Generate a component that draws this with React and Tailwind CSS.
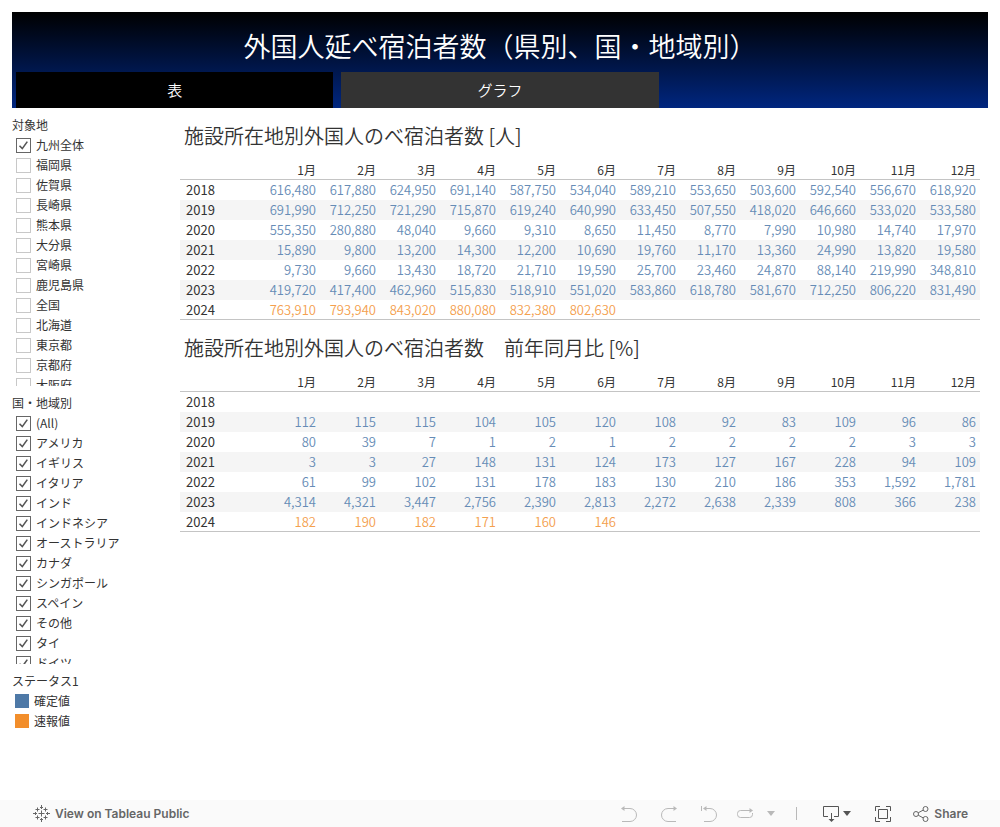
import { useState } from 'react';

const prefectures = [
  '九州全体', '福岡県', '佐賀県', '長崎県', '熊本県', '大分県', '宮崎県',
  '鹿児島県', '全国', '北海道', '東京都', '京都府', '大阪府',
];

const countries = [
  '(All)', 'アメリカ', 'イギリス', 'イタリア', 'インド', 'インドネシア', 'オーストラリア',
  'カナダ', 'シンガポール', 'スペイン', 'その他', 'タイ', 'ドイツ',
];

const months = ['1月', '2月', '3月', '4月', '5月', '6月', '7月', '8月', '9月', '10月', '11月', '12月'];

const guests = [
  { year: 2018, values: [616480, 617880, 624950, 691140, 587750, 534040, 589210, 553650, 503600, 592540, 556670, 618920] },
  { year: 2019, values: [691990, 712250, 721290, 715870, 619240, 640990, 633450, 507550, 418020, 646660, 533020, 533580] },
  { year: 2020, values: [555350, 280880, 48040, 9660, 9310, 8650, 11450, 8770, 7990, 10980, 14740, 17970] },
  { year: 2021, values: [15890, 9800, 13200, 14300, 12200, 10690, 19760, 11170, 13360, 24990, 13820, 19580] },
  { year: 2022, values: [9730, 9660, 13430, 18720, 21710, 19590, 25700, 23460, 24870, 88140, 219990, 348810] },
  { year: 2023, values: [419720, 417400, 462960, 515830, 518910, 551020, 583860, 618780, 581670, 712250, 806220, 831490] },
  { year: 2024, values: [763910, 793940, 843020, 880080, 832380, 802630], preliminary: true },
];

const ratios = [
  { year: 2018, values: [] },
  { year: 2019, values: [112, 115, 115, 104, 105, 120, 108, 92, 83, 109, 96, 86] },
  { year: 2020, values: [80, 39, 7, 1, 2, 1, 2, 2, 2, 2, 3, 3] },
  { year: 2021, values: [3, 3, 27, 148, 131, 124, 173, 127, 167, 228, 94, 109] },
  { year: 2022, values: [61, 99, 102, 131, 178, 183, 130, 210, 186, 353, 1592, 1781] },
  { year: 2023, values: [4314, 4321, 3447, 2756, 2390, 2813, 2272, 2638, 2339, 808, 366, 238] },
  { year: 2024, values: [182, 190, 182, 171, 160, 146], preliminary: true },
];

function FilterList({ title, items, initial }) {
  const [selected, setSelected] = useState(initial);

  const toggle = (item) => {
    setSelected((prev) => (prev.includes(item) ? prev.filter((i) => i !== item) : [...prev, item]));
  };

  return (
    <fieldset>
      <legend className="h-5 leading-5">{title}</legend>
      <div className="h-[251px] overflow-y-auto pl-1 [scrollbar-width:none]">
        {items.map((item) => (
          <label key={item} className="flex h-5 items-center gap-[5px]">
            <span className="grid size-[15px] shrink-0">
              <input
                type="checkbox"
                checked={selected.includes(item)}
                onChange={() => toggle(item)}
                className="peer col-start-1 row-start-1 appearance-none border border-[#c8c8c8] bg-white checked:border-[#666]"
              />
              <svg
                viewBox="0 0 15 15"
                className="pointer-events-none invisible col-start-1 row-start-1 peer-checked:visible"
                fill="none"
                stroke="#555"
                strokeWidth="1.6"
              >
                <path d="M3.5 7.8 6.3 10.6 11.3 3.6" />
              </svg>
            </span>
            <span>{item}</span>
          </label>
        ))}
      </div>
    </fieldset>
  );
}

function MonthTable({ title, rows }) {
  return (
    <section>
      <h2 className="h-10 pl-1 text-xl leading-8 font-[350] whitespace-pre">{title}</h2>
      <table className="w-full table-fixed text-right text-[13px] leading-5">
        <thead>
          <tr className="h-5 text-xs leading-5 shadow-[inset_0_-1px_0_#c4c4c4]">
            <th className="w-20 p-0" />
            {months.map((month) => (
              <th key={month} scope="col" className="p-0 pr-1 font-normal">{month}</th>
            ))}
          </tr>
        </thead>
        <tbody>
          {rows.map((row) => (
            <tr key={row.year} className="h-5 even:bg-[#f5f5f5] last:shadow-[inset_0_-1px_0_#c4c4c4]">
              <th scope="row" className="p-0 pl-1.5 text-left font-normal">{row.year}</th>
              {months.map((month, i) => (
                <td
                  key={month}
                  className={`p-0 pr-1 font-[350] ${row.preliminary ? 'text-[#f4a04e]' : 'text-[#668cb6]'}`}
                >
                  {row.values[i]?.toLocaleString('en-US')}
                </td>
              ))}
            </tr>
          ))}
        </tbody>
      </table>
    </section>
  );
}

function TableauLogo() {
  return (
    <svg width="17" height="17" viewBox="0 0 17 17" fill="none" stroke="#666" strokeWidth="1">
      <path d="M8.5 5.5v6M5.5 8.5h6M8.5 0v4M7 2.500h3M8.5 13v4M7 14.500h3M2.500 7v3M0 8.5h4M14.500 7v3M13 8.5h4" />
      <path d="M4.5 2.5v4M2.5 4.5h4M12.5 2.5v4M10.5 4.5h4M4.5 10.5v4M2.5 12.5h4M12.5 10.5v4M10.5 12.5h4" />
    </svg>
  );
}

function Toolbar() {
  return (
    <footer className="flex h-[27px] items-center justify-between bg-[#fafafa] pr-8 pl-[33px] font-['Inter',sans-serif] text-xs font-semibold text-[#666]">
      <a href="#view" className="flex items-center gap-[5px]">
        <TableauLogo />
        <span>View on Tableau Public</span>
      </a>
      <div className="flex items-center">
        <button type="button" aria-label="Undo" className="mr-6">
          <svg width="16" height="16" viewBox="0 0 16 16" fill="none" stroke="#b9b9b9">
            <path d="M1 2.5h8a6.5 6.5 0 0 1 0 13H1" />
            <path d="M0 2.5 3.5 0v5z" fill="#b9b9b9" stroke="none" />
          </svg>
        </button>
        <button type="button" aria-label="Redo" className="mr-6">
          <svg width="16" height="16" viewBox="0 0 16 16" fill="none" stroke="#b9b9b9">
            <path d="M15 2.5H7a6.5 6.5 0 0 0 0 13h8" />
            <path d="M16 2.5 12.5 0v5z" fill="#b9b9b9" stroke="none" />
          </svg>
        </button>
        <button type="button" aria-label="Revert" className="mr-5">
          <svg width="16" height="16" viewBox="0 0 16 16" fill="none" stroke="#b9b9b9">
            <path d="M.5 0v5M3 2.5h6a6.5 6.5 0 0 1 0 13H3" />
            <path d="M2 2.5 5.5 0v5z" fill="#b9b9b9" stroke="none" />
          </svg>
        </button>
        <button type="button" aria-label="Refresh" className="mr-3.5">
          <svg width="16" height="16" viewBox="0 0 16 16" fill="none" stroke="#b9b9b9">
            <path d="M14 4.5H3.500a3 3 0 0 0-3 3v1a3 3 0 0 0 3 3h9a3 3 0 0 0 3-3V7" />
            <path d="M16 4.5 12.5 2v5z" fill="#b9b9b9" stroke="none" />
          </svg>
        </button>
        <button type="button" aria-label="Refresh options" className="mr-[21px]">
          <svg width="8" height="5" viewBox="0 0 8 5"><path d="M0 0h8L4 5z" fill="#b9b9b9" /></svg>
        </button>
        <span className="mr-[26px] h-[13px] w-px bg-[#b9b9b9]" />
        <button type="button" aria-label="Download" className="mr-6 flex items-center gap-1">
          <svg width="16" height="16" viewBox="0 0 16 16" fill="none" stroke="#555">
            <path d="M5 10.5H.5V.5h15v10H11M8.500 7v7" />
            <path d="M5.500 13h6L8.500 16z" fill="#555" stroke="none" />
          </svg>
          <svg width="8" height="5" viewBox="0 0 8 5"><path d="M0 0h8L4 5z" fill="#555" /></svg>
        </button>
        <button type="button" aria-label="Full screen" className="mr-[22px]">
          <svg width="16" height="16" viewBox="0 0 16 16" fill="none" stroke="#555">
            <path d="M3.5 3.5h9v9h-9zM.5 5V.5H5M11 .5h4.5V5M15.5 11v4.5H11M5 15.5H.5V11" />
          </svg>
        </button>
        <button type="button" className="flex items-center gap-[5px]">
          <svg width="16" height="16" viewBox="0 0 16 16" fill="none" stroke="#666">
            <circle cx="3" cy="8" r="2.5" />
            <circle cx="12.5" cy="3" r="2.5" />
            <circle cx="12.5" cy="13" r="2.5" />
            <path d="m5.2 6.8 5-2.7M5.200 9.200l5 2.700" />
          </svg>
          <span>Share</span>
        </button>
      </div>
    </footer>
  );
}

export default function App() {
  return (
    <div className="flex min-h-screen flex-col bg-white font-['Noto_Sans_CJK_JP',sans-serif] text-[#333]">
      <div className="flex-1 px-3 pt-3">
        <header className="bg-linear-to-b/srgb from-black to-[#00267f] text-white">
          <h1 className="pt-3.5 text-center text-[27px] leading-10 font-[350]">外国人延べ宿泊者数（県別、国・地域別）</h1>
          <nav className="grid grid-cols-3 gap-2 px-1 pt-1.5">
            <button type="button" className="h-9 bg-black text-[15px] font-[350]">表</button>
            <button type="button" className="h-9 bg-[#333] text-[15px] font-[350]">グラフ</button>
          </nav>
        </header>

        <div className="flex pt-[7px]">
          <aside className="flex w-[168px] shrink-0 flex-col gap-[7px] text-xs">
            <FilterList title="対象地" items={prefectures} initial={['九州全体']} />
            <FilterList title="国・地域別" items={countries} initial={countries} />
            <div className="leading-5">
              <h3>ステータス1</h3>
              <ul className="pl-[3px]">
                <li className="flex items-center gap-[5px]">
                  <span className="size-3.5 bg-[#4e79a7]" />
                  確定値
                </li>
                <li className="flex items-center gap-[5px]">
                  <span className="size-3.5 bg-[#f28e2b]" />
                  速報値
                </li>
              </ul>
            </div>
          </aside>

          <main className="flex flex-1 flex-col gap-3 pt-[5px] pr-2">
            <MonthTable title="施設所在地別外国人のべ宿泊者数 [人]" rows={guests} />
            <MonthTable title="施設所在地別外国人のべ宿泊者数　前年同月比 [%]" rows={ratios} />
          </main>
        </div>
      </div>
      <Toolbar />
    </div>
  );
}
